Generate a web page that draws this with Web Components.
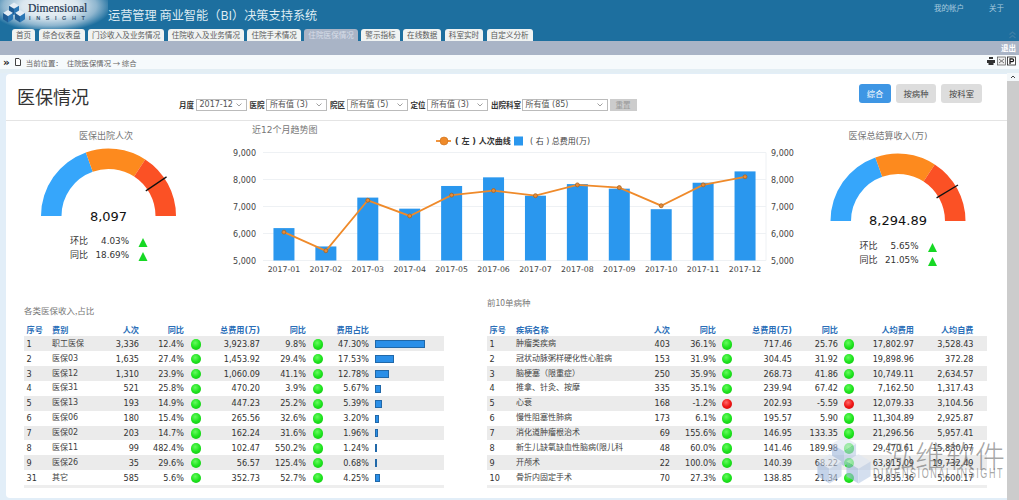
<!DOCTYPE html>
<html lang="zh">
<head>
<meta charset="utf-8">
<style>
html,body{margin:0;padding:0;width:1019px;height:500px;overflow:hidden;background:#e2eef8;font-family:"DejaVu Sans","Noto Sans CJK SC",sans-serif}
app-page{display:block;width:1019px;height:500px}
</style>
</head>
<body>
<app-page>
  <top-header></top-header>
  <nav-tabs active="住院医保情况">首页|综合仪表盘|门诊收入及业务情况|住院收入及业务情况|住院手术情况|住院医保情况|警示指标|在线数据|科室实时|自定义分析</nav-tabs>
  <logout-bar></logout-bar>
  <bread-crumb></bread-crumb>
  <main-area>
    <report-card>
      <card-head></card-head>
      <chart-row>
        <gauge-chart slot="left" caption="医保出院人次" capx="98" value="8,097" needle="146" cy="95" ring="4.03%" yoy="18.69%" cx="100.5"></gauge-chart>
        <trend-chart></trend-chart>
        <gauge-chart slot="right" caption="医保总结算收入(万)" capx="90" value="8,294.89" needle="149" cy="100" ring="5.65%" yoy="21.05%" cx="100"></gauge-chart>
      </chart-row>
      <table-row>
        <data-table kind="a" caption="各类医保收入,占比"></data-table>
        <data-table kind="b" caption="前10单病种"></data-table>
      </table-row>
    </report-card>
    <scroll-rail></scroll-rail>
    <water-mark></water-mark>
  </main-area>
</app-page>
<script>
const FONT='"DejaVu Sans","Noto Sans CJK SC",sans-serif';
function def(name,css,html,init){
  customElements.define(name,class extends HTMLElement{
    connectedCallback(){
      if(this.shadowRoot)return;
      const raw=this.textContent;
      const s=this.attachShadow({mode:'open'});
      const body=typeof html==='function'?html(this,raw):html;
      s.innerHTML='<style>'+css+'</style>'+body;
      if(init)init(this,s);
    }
  });
}
const cubes=(a,b,c)=>{
  const cube=(x,y,r)=>`<polygon points="${x},${y-r} ${x+r},${y-r/2} ${x},${y} ${x-r},${y-r/2}" fill="${c}"/><polygon points="${x-r},${y-r/2} ${x},${y} ${x},${y+r} ${x-r},${y+r/2}" fill="${a}"/><polygon points="${x+r},${y-r/2} ${x},${y} ${x},${y+r} ${x+r},${y+r/2}" fill="${b}"/>`;
  return cube(13,7,5)+cube(7,13,5)+cube(19,13,5);
};
def('app-page',':host{display:block;width:1019px;height:500px;overflow:hidden;position:relative}','<slot></slot>');
def('top-header',`
:host{display:flex;height:29px;background:#1d6f9f;position:relative;font-family:${FONT}}
.logo{width:108px;display:flex;gap:2px;padding:2px 0 0 2px;box-sizing:border-box;height:29px;background:radial-gradient(ellipse 62px 26px at 50px 6px,#f2f6f9 0,#dbe7ef 45%,#8fb6cf 75%,#1d6f9f 100%)}
.w{line-height:1}
.d{font:500 11.600px/12px "Liberation Serif",serif;color:#1d3550;margin-top:1px;-webkit-text-stroke:.2px #1d3550}
.i{font:700 5.500px/7px "Liberation Sans",sans-serif;color:#33506d;letter-spacing:5.600px;margin-top:0;white-space:nowrap;padding-left:1px}
h1{margin:0;font:400 12.200px/29px "Noto Sans CJK SC",sans-serif;color:#dfecf3;padding-top:1px;height:24px;white-space:nowrap}
.r{margin-left:auto;display:flex;gap:25px;padding:3px 15px 0 0;font:7.500px/9px "Noto Sans CJK SC",sans-serif;color:#a9cbdf}
`,`<div class="logo"><svg width="24" height="21" viewBox="1 1.500 24 17" preserveAspectRatio="none">${cubes('#1f5c94','#2a76b4','#e4edf5')}</svg><div class="w"><div class="d">Dimensional</div><div class="i">INSIGHT</div></div></div>
<h1>运营管理 商业智能（BI）决策支持系统</h1><div class="r"><span>我的帐户</span><span>关于</span></div>`);
def('nav-tabs',`
:host{display:flex;height:12px;background:#1d6f9f;padding-left:12px;gap:3.400px;position:relative;font:7.600px/12px "Noto Sans CJK SC",sans-serif}
span{padding:0 4px;background:#f0f3f2;color:#5a5a5a;border-radius:3px 3px 0 0;white-space:nowrap}
span.on{background:#a9b4c6;color:#d8dee8}
`,(el,raw)=>raw.trim().split('|').map(t=>`<span class="${t===el.getAttribute('active')?'on':''}">${t}</span>`).join('')+`<svg style="position:absolute;right:2px;top:1px" width="9" height="9" viewBox="0 0 9 9"><path d="M1.500 4.500 4.500 2 7.500 4.500M1.500 8 4.500 5.500 7.500 8" fill="none" stroke="#3d7ea5" stroke-width="1.300"/></svg>`);
def('logout-bar',`
:host{display:flex;justify-content:flex-end;height:14px;background:#a9b4c6;font:bold 7.500px/14px "Noto Sans CJK SC",sans-serif;color:#fff;padding-right:3px}
`,'<span>退出</span>');
def('bread-crumb',`
:host{display:flex;align-items:flex-start;height:18px;box-sizing:border-box;padding:2px 3px 0 3px;background:linear-gradient(180deg,#f6fafc 0,#f6fafc 14px,#e3eef4 14px);font:7.400px/11px "Noto Sans CJK SC",sans-serif;color:#666}
.c{margin-left:4px;margin-right:3px}
.p{margin-left:1px}
.ic{margin-left:auto;display:flex;gap:1px;margin-top:-1px}
.a{font:bold 10.500px/10px "DejaVu Sans",sans-serif;color:#222}
`,`<span class="a">»</span><svg style="margin-left:4px" width="8" height="10" viewBox="0 0 8 10"><path d="M1.500 1.500h3.500l1.500 1.500v5.500h-5z" fill="#fff" stroke="#444"/></svg><span class="c">当前位置：</span><span class="p">住院医保情况 → 综合</span>
<span class="ic"><svg width="10" height="10" viewBox="0 0 10 10"><path d="M3 1h4v2H3zM1 4h8v3H7.500v2h-5V7H1z" fill="#333"/></svg><svg width="9" height="10" viewBox="0 0 9 10"><rect x=".5" y="1" width="8" height="8" fill="#eee" stroke="#555" stroke-width=".7"/><path d="M2 3l5 4M7 3L2 7" stroke="#777"/></svg><svg width="9" height="10" viewBox="0 0 9 10"><rect x=".5" y="1" width="8" height="8" fill="#fff" stroke="#222" stroke-width=".8"/><path d="M3 8V2.800h2.200a1.300 1.300 0 0 1 0 2.800H3" fill="none" stroke="#111" stroke-width="1.200"/></svg></span>`);
def('main-area',':host{display:flex;height:427px;position:relative}','<slot></slot>');
def('report-card',`
:host{display:block;box-sizing:border-box;margin:1px 0 2px 6px;width:1001px;height:424px;background:#fff;border-radius:4px 0 0 4px}
`,'<slot></slot>');
def('scroll-rail',`
:host{display:flex;flex-direction:column;width:12px;height:427px}
.t{height:8px;background:#f4f8fa;display:flex;justify-content:center}
.b{flex:1;background:#ccc}
`,'<div class="t"><svg width="8" height="8" viewBox="0 0 8 8"><path d="M2 5 4 3 6 5" fill="none" stroke="#444"/></svg></div><div class="b"></div>');
const sel=(w,t,ml)=>`<span class="s" style="width:${w}px${ml?';margin-left:'+ml+'px':''}"><em>${t}</em><svg width="6" height="4" viewBox="0 0 6 4"><path d="M.5.500 3 3 5.500.500" fill="none" stroke="#888" stroke-width=".8"/></svg></span>`;
def('card-head',`
:host{display:flex;align-items:flex-start;height:47px;box-sizing:border-box;border-bottom:1px solid #e4e4e4;font-family:${FONT}}
h2{margin:11px 0 0 11px;font:400 18px/22px "Noto Sans CJK SC",sans-serif;color:#333;width:72px;white-space:nowrap}
.f{display:flex;align-items:center;margin:24px 0 0 90px;height:14px;font:bold 7.500px/12px "Noto Sans CJK SC",sans-serif;color:#333;white-space:nowrap}
.s{display:inline-flex;align-items:center;justify-content:space-between;box-sizing:border-box;height:12px;border:1px solid #bbb;background:#fff;padding:0 4px 0 3px;margin:0 3px 0 1.500px;font:400 8px/10px ${FONT};color:#555}
em{font-style:normal}
.x{height:12px;width:27px;margin-left:-1px;background:#ccc;color:#999;font-weight:400;text-align:center;font-size:7.500px;line-height:12px}
.b{margin:10px 25px 0 auto;display:flex;gap:5px}
.b span{height:19px;border-radius:3px;background:#ddd;color:#444;font:400 8.300px/19px "Noto Sans CJK SC",sans-serif;text-align:center}
.b .on{background:#3e96e4;color:#fff}
`,`<h2>医保情况</h2><div class="f"><span>月度</span>${sel(51,'2017-12')}<span>医院</span>${sel(61,'所有值 (3)')}<span>院区</span>${sel(61,'所有值 (5)')}<span>定位</span>${sel(61,'所有值 (3)')}<span>出院科室</span>${sel(86,'所有值 (85)',.5)}<span class="x">重置</span></div>
<div class="b"><span class="on" style="width:32px">综合</span><span style="width:40px">按病种</span><span style="width:41px">按科室</span></div>`);
def('chart-row',`
:host{display:flex;height:174px}
`,'<slot name="left"></slot><slot></slot><slot name="right"></slot>');
function arc(cx,cy,R,r,a,b){
  const p=(rad,d)=>{const t=Math.PI*(1-d/180);return (cx+rad*Math.cos(t)).toFixed(2)+' '+(cy-rad*Math.sin(t)).toFixed(2)};
  return `M${p(R,a)}A${R} ${R} 0 0 1 ${p(R,b)}L${p(r,b)}A${r} ${r} 0 0 0 ${p(r,a)}Z`;
}
def('gauge-chart',`
:host{display:block;width:200px;height:174px;flex:none}
:host([slot=left]){margin-left:2px}
:host([slot=right]){margin-left:4px}
svg{display:block}
text{font-family:${FONT}}
`,(el)=>{
  const g=n=>el.getAttribute(n),cx=+g('cx'),cy=+g('cy'),nd=+g('needle');
  const t=Math.PI*(1-nd/180);
  const R=67.5,r=47;
  return `<svg width="200" height="174" viewBox="0 0 200 174">
<text x="${g('capx')}" y="17.500" text-anchor="middle" font-size="9" fill="#777">${g('caption')}</text>
<path d="${arc(cx,cy,R,r,0,70.4)}" fill="#36a6fb"/><path d="${arc(cx,cy,R,r,70.4,123)}" fill="#fd8a1e"/><path d="${arc(cx,cy,R,r,123,180)}" fill="#fb5125"/>
<line x1="${cx+45*Math.cos(t)}" y1="${cy-45*Math.sin(t)}" x2="${cx+70*Math.cos(t)}" y2="${cy-70*Math.sin(t)}" stroke="#111" stroke-width="1.300"/>
<text x="${cx}" y="${cy+(g('value').length>5?4:5)}" text-anchor="middle" font-size="13" fill="#111">${g('value')}</text>
${[['环比',g('ring'),25],['同比',g('yoy'),39]].map(([a,b,d])=>`<text x="${cx-38.500}" y="${cy+d+3}" font-size="9" fill="#333">${a}</text><text x="${cx+20.500}" y="${cy+d+3}" text-anchor="end" font-size="8.800" fill="#333">${b}</text><polygon points="${cx+30},${cy+d+6} ${cx+39},${cy+d+6} ${cx+34.500},${cy+d-3}" fill="#16d824"/>`).join('')}
</svg>`;
});
def('trend-chart',`
:host{display:block;width:562px;height:174px;flex:none;margin-left:24px}
svg{display:block}
text{font-family:${FONT};fill:#444;font-size:8px}
.t{font-size:9px;fill:#777}
`,()=>{
  const OX=232,OY=121,L=263-OX,W=503,Top=152.5-OY,st=27;
  const y=v=>Top+(9000-v)/1000*st;
  const bars=[6200,5520,7330,6920,7760,8080,7400,7830,7660,6900,7880,8300];
  const line=[6050,5360,7230,6650,7420,7590,7400,7800,7700,7030,7800,8100];
  const cw=W/12;const cx=i=>L+cw*(i+.5);
  let s='';
  [9,8,7,6,5].forEach(k=>{const v=k*1000,yy=y(v);
    s+=`<line x1="${L}" x2="${L+W}" y1="${yy}" y2="${yy}" stroke="#eef1f4"/>`;
    s+=`<text x="${L-7}" y="${yy+3}" text-anchor="end">${k},000</text><text x="${L+W+5}" y="${yy+3}">${k},000</text>`;});
  s+=`<line x1="${L+W}" x2="${L+W}" y1="${Top}" y2="${y(5000)}" stroke="#eef1f4"/>`;
  bars.forEach((b,i)=>{s+=`<rect x="${cx(i)-10.500}" y="${y(b)}" width="21" height="${y(5000)-y(b)}" fill="#2a97ee"/>`;
    s+=`<text x="${cx(i)}" y="${y(5000)+11}" text-anchor="middle" style="font-size:7.800px">2017-${String(i+1).padStart(2,'0')}</text>`;});
  s+=`<polyline points="${line.map((v,i)=>cx(i)+','+y(v)).join(' ')}" fill="none" stroke="#ef8a2a" stroke-width="1.800"/>`;
  line.forEach((v,i)=>{s+=`<circle cx="${cx(i)}" cy="${y(v)}" r="2" fill="#e58a3a" stroke="#a9661f" stroke-width=".8"/>`;});
  s+=`<text class="t" x="20" y="12">近12个月趋势图</text>`;
  s+=`<line x1="${437-OX-1}" x2="${451-OX}" y1="20" y2="20" stroke="#ef8a2a" stroke-width="1.800"/><circle cx="${444-OX}" cy="20" r="4" fill="#ef8a2a" stroke="#c9701d" stroke-width=".6"/>`;
  s+=`<text x="${455-OX}" y="23" style="font-weight:700;fill:#333">( 左 ) 人次曲线</text>`;
  s+=`<rect x="${514-OX}" y="15.500" width="9" height="9" fill="#2a97ee"/>`;
  s+=`<text x="${530-OX}" y="23" style="fill:#444">( 右 ) 总费用(万)</text>`;
  return `<svg width="562" height="174" viewBox="0 0 562 174">${s}</svg>`;
});
def('table-row',`
:host{display:flex;height:193px;align-items:stretch;padding-left:18px;gap:43px}
`,'<slot></slot>');
const TA={cols:'28px 60px 27px 45px 24px 52px 46px 24px 39px 75px',w:420,pb:7,
 head:['序号','费别','人次','同比','','总费用(万)','同比','','费用占比',''],
 rows:[['1','职工医保','3,336','12.4%',1,'3,923.87','9.8%',1,'47.30%',50],['2','医保03','1,635','27.4%',1,'1,453.92','29.4%',1,'17.53%',19],['3','医保12','1,310','23.9%',1,'1,060.09','41.1%',1,'12.78%',14],['4','医保31','521','25.8%',1,'470.20','3.9%',1,'5.67%',6],['5','医保13','193','14.9%',1,'447.23','25.2%',1,'5.39%',6.500],['6','医保06','180','15.4%',1,'265.56','32.6%',1,'3.20%',3.500],['7','医保02','203','14.7%',1,'162.24','31.6%',1,'1.96%',3],['8','医保11','99','482.4%',1,'102.47','550.2%',1,'1.24%',1],['9','医保26','35','29.6%',1,'56.57','125.4%',1,'0.68%',1],['31','其它','585','5.6%',1,'352.73','52.7%',1,'4.25%',5]]};
const TB={cols:'29px 116px 38px 46px 22px 54px 46px 22px 54px 59.500px 13.500px',w:500,pb:15,
 head:['序号','疾病名称','人次','同比','','总费用(万)','同比','','人均费用','人均自费',''],
 rows:[['1','肿瘤类疾病','403','36.1%',1,'717.46','25.76',1,'17,802.97','3,528.43'],['2','冠状动脉粥样硬化性心脏病','153','31.9%',1,'304.45','31.92',1,'19,898.96','372.28'],['3','脑梗塞（限重症）','250','35.9%',1,'268.73','41.86',1,'10,749.11','2,634.57'],['4','推拿、针灸、按摩','335','35.1%',1,'239.94','67.42',1,'7,162.50','1,317.43'],['5','心衰','168','-1.2%',0,'202.93','-5.59',0,'12,079.33','3,104.56'],['6','慢性阻塞性肺病','173','6.1%',1,'195.57','5.90',1,'11,304.89','2,925.87'],['7','消化道肿瘤根治术','69','155.6%',1,'146.95','133.35',1,'21,296.56','5,957.41'],['8','新生儿缺氧缺血性脑病(限儿科','48','60.0%',1,'141.46','189.98',1,'29,470.61','15,830.07'],['9','开颅术','22','100.0%',1,'140.39','68.22',1,'63,815.09','19,732.49'],['10','骨折内固定手术','70','27.3%',1,'138.85','21.34',1,'19,835.36','5,600.17']]};
def('data-table',`
:host{display:flex;flex-direction:column;justify-content:flex-end;flex:none;font-family:${FONT};font-size:8.150px;color:#333}
.cap{font:400 8.500px/12px "Noto Sans CJK SC",sans-serif;color:#777}
.r{display:grid;height:14.870px;align-items:center;line-height:14px}
.r>*{white-space:nowrap;min-width:0}
.r:nth-child(even){background:#ebebeb}
.h{height:13px;color:#2a6eb8;font-weight:700}
.n{text-align:right}
.l{padding-left:2.500px}
.z{font-size:8px;overflow:visible;color:#444}
.dot{width:10.500px;height:10.500px;border-radius:50%;justify-self:center;margin-top:1px;background:radial-gradient(circle at 42% 35%,#66fa5e 0,#1ee41e 50%,#12bc12 100%)}
.red{background:radial-gradient(circle at 42% 35%,#ff6a6a 0,#ef1616 50%,#c40c0c 100%)}
.bar{height:8px;box-sizing:border-box;background:#2a8fe8;border:1px solid #2168a8;margin:1px 0 0 6px}
.end{height:3px;background:#eee}
`,(el)=>{
  const T=el.getAttribute('kind')==='a'?TA:TB;const a=T===TA;
  const cell=(v,i)=>{
    if(a&&i===9)return `<div class="bar" style="width:${v}px"></div>`;
    if(i===4||i===7)return v===''?'<span></span>':`<div class="dot ${v?'':'red'}"></div>`;
    if(i===0)return `<span class="l">${v}</span>`;
    if(i===1)return `<span class="z">${v}</span>`;
    return `<span class="n">${v}</span>`;
  };
  el.style.width=T.w+'px';
  return `<div class="cap" style="padding-bottom:${T.pb}px">${el.getAttribute('caption')}</div>
<div class="tb"><div class="r h" style="grid-template-columns:${T.cols}">${T.head.map((v,i)=>i===0?`<span class="l">${v}</span>`:i===1?`<span>${v}</span>`:`<span class="n">${v}</span>`).join('')}</div>
${T.rows.map(r=>`<div class="r" style="grid-template-columns:${T.cols}">${r.map(cell).join('')}${a?'':'<span></span>'}</div>`).join('')}</div><div class="end"></div>`;
});
def('water-mark',`
:host{position:absolute;left:815px;top:362px;width:195px;height:60px;pointer-events:none;display:block}
svg{position:absolute;left:0;top:0;opacity:.6}
.a{position:absolute;left:70px;top:3px;font:300 30px/32px "Noto Sans CJK SC",sans-serif;color:rgba(90,90,90,.55);white-space:nowrap}
.b{position:absolute;left:58px;top:31px;font:400 9px/14px "Liberation Sans",sans-serif;color:rgba(110,110,110,.6);letter-spacing:1.600px;transform:scaleY(1.600);white-space:nowrap}
`,`<svg width="58" height="50" viewBox="1 1.500 24 17" preserveAspectRatio="none">${cubes('#9db6dc','#b9cbe6','#dfe7f3')}</svg><div class="a">泓维软件</div><div class="b">DIMENSIONAL INSIGHT</div>`);
</script>
</body>
</html>
